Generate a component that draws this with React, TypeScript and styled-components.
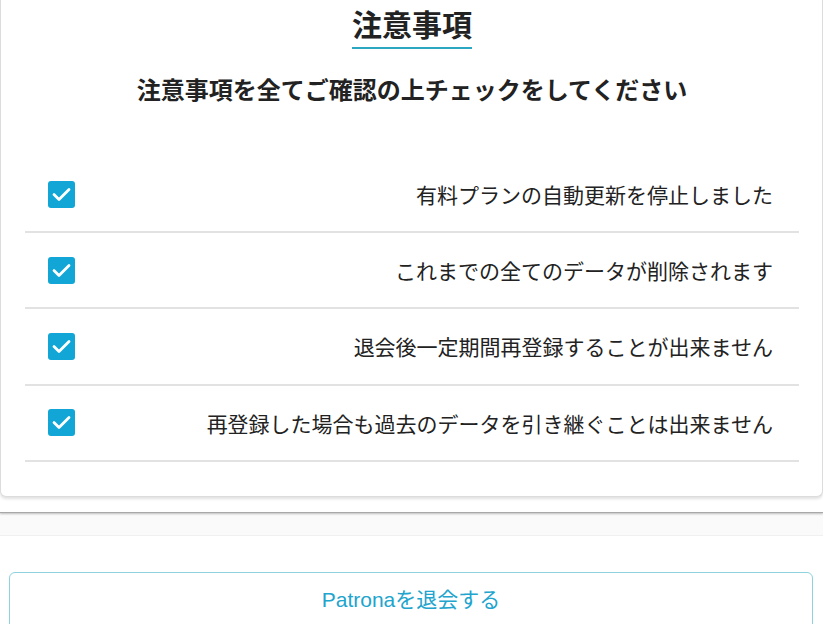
import React from "react";
import styled, { createGlobalStyle } from "styled-components";

const Global = createGlobalStyle`
  html, body { margin: 0; padding: 0; background: #ffffff; }
  body { font-family: "Noto Sans CJK JP", "Noto Sans", sans-serif; color: #222; }
`;

const Outer = styled.div`
  position: relative;
  z-index: 1;
  background: #ffffff;
  padding-bottom: 15px;
  border-bottom: 1px solid #a8a8a8;
  box-shadow: 0 1px 2px rgba(0, 0, 0, 0.25);
`;

const Card = styled.section`
  background: #ffffff;
  border: 1px solid #dcdcdc;
  border-top: none;
  border-radius: 0 0 6px 6px;
  box-shadow: 0 2px 3px rgba(0, 0, 0, 0.12);
  padding: 3px 23px 34px 24px;
  display: flex;
  flex-direction: column;
  align-items: center;
`;

const Title = styled.h2`
  margin: 0;
  font-size: 30px;
  font-weight: 700;
  line-height: 40px;
  color: #222;
  padding-bottom: 4px;
  border-bottom: 2px solid #2aa7c3;
`;

const Lead = styled.p`
  margin: 22px 0 0;
  font-size: 24px;
  font-weight: 700;
  line-height: 36px;
  color: #222;
`;

const List = styled.ul`
  list-style: none;
  margin: 50px 0 0;
  padding: 0;
  width: 100%;
`;

const Row = styled.li`
  display: flex;
  align-items: center;
  justify-content: space-between;
  height: 74.2px;
  padding: 0 26px 0 23px;
  border-bottom: 2px solid #e2e2e2;
`;

const Box = styled.span`
  width: 27px;
  height: 27px;
  border-radius: 3px;
  background: #11a6d6;
  display: flex;
  align-items: center;
  justify-content: center;
  flex-shrink: 0;
`;

const Label = styled.span`
  font-size: 21px;
  line-height: 30px;
  color: #222;
  text-align: right;
`;

const Band = styled.div`
  height: 22px;
  background: #fafafa;
  border-bottom: 1px solid #f0f0f0;
`;

const Footer = styled.div`
  padding: 36px 10px 0 9px;
`;

const Button = styled.button`
  width: 100%;
  height: 60px;
  background: #ffffff;
  border: 1px solid #8ed2e0;
  border-radius: 6px;
  color: #21a4cd;
  font-family: "Liberation Sans", "Noto Sans CJK JP", sans-serif;
  font-size: 21px;
  cursor: pointer;
  padding: 0 0 8px;
`;

const items = [
  "有料プランの自動更新を停止しました",
  "これまでの全てのデータが削除されます",
  "退会後一定期間再登録することが出来ません",
  "再登録した場合も過去のデータを引き継ぐことは出来ません",
];

const Check = () => (
  <svg width="19" height="15" viewBox="0 0 19 15" fill="none">
    <path d="M2 7.6 L7 12.4 L17 2.4" stroke="#fff" strokeWidth="2.8" strokeLinecap="round" strokeLinejoin="round" />
  </svg>
);

export default function App() {
  return (
    <>
      <Global />
      <Outer>
        <Card>
          <Title>注意事項</Title>
          <Lead>注意事項を全てご確認の上チェックをしてください</Lead>
          <List>
            {items.map((t) => (
              <Row key={t}>
                <Box>
                  <Check />
                </Box>
                <Label>{t}</Label>
              </Row>
            ))}
          </List>
        </Card>
      </Outer>
      <Band />
      <Footer>
        <Button>Patronaを退会する</Button>
      </Footer>
    </>
  );
}
